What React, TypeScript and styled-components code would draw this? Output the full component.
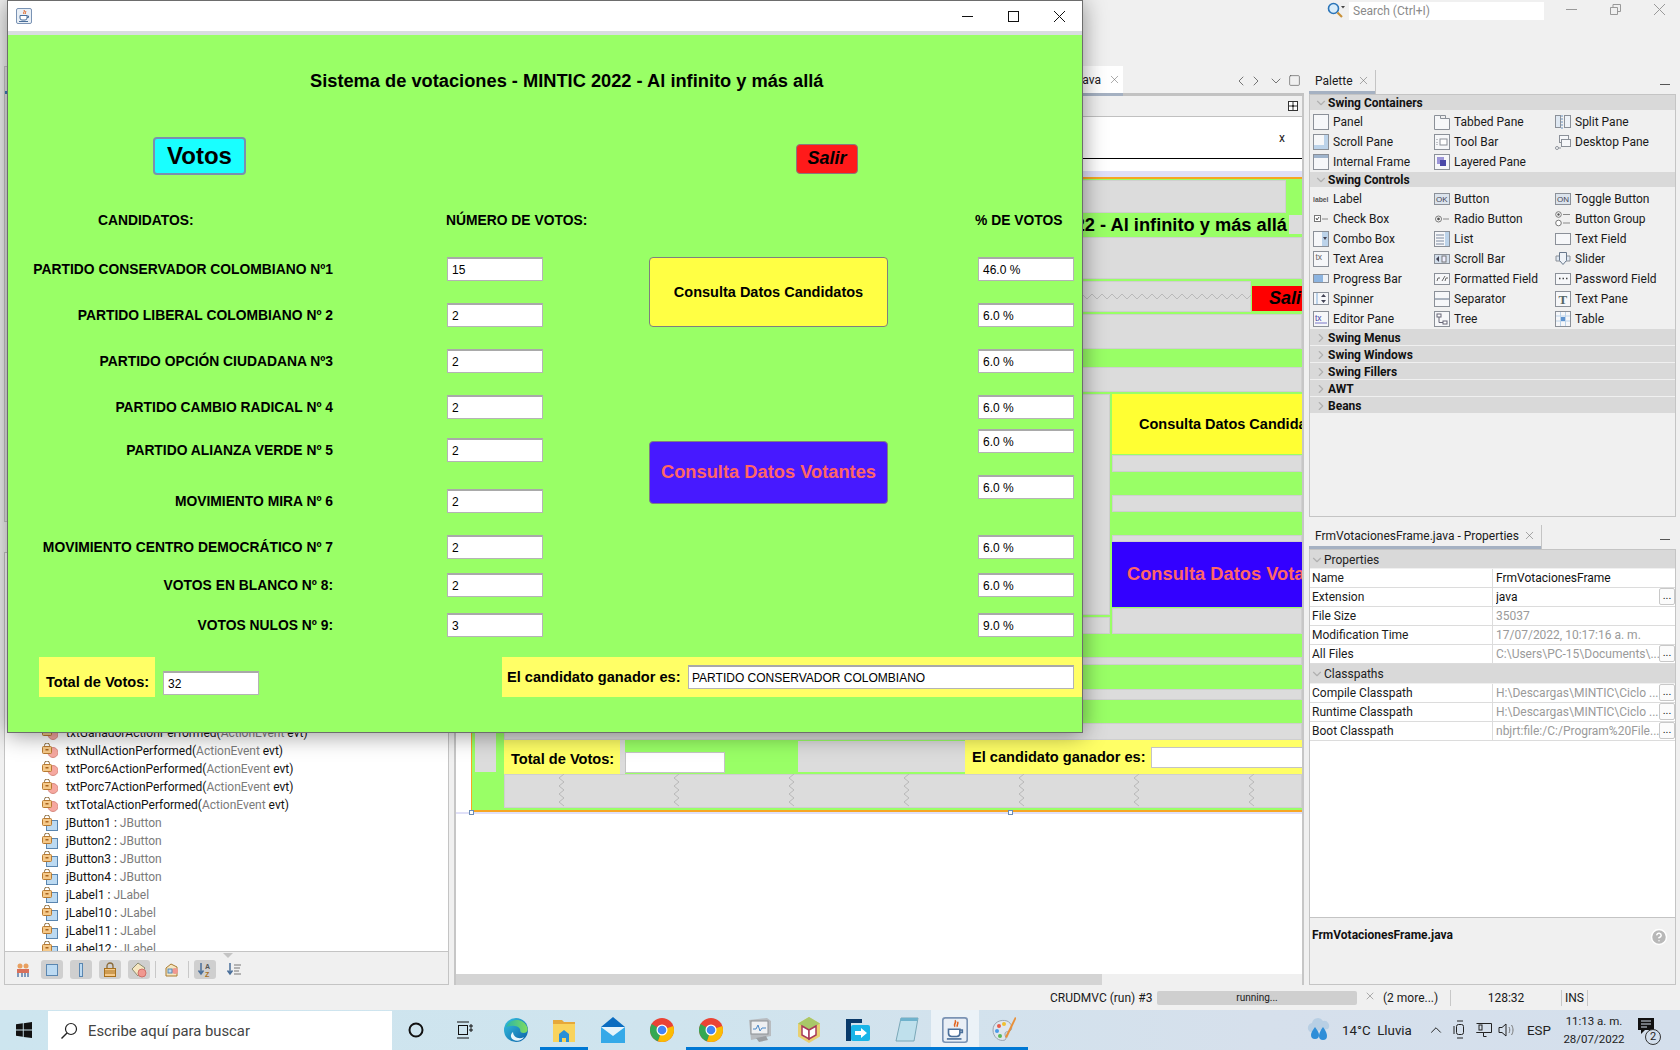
import React from "react";
import styled, { createGlobalStyle } from "styled-components";
import { ChevronDown, ChevronLeft, ChevronRight, X, HelpCircle, Square, ChevronUp } from "lucide-react";

const GlobalStyle = createGlobalStyle`
	html, body { margin: 0; padding: 0; background: #f0f0f0; overflow: hidden; }
	* { box-sizing: border-box; }
	#root { width: 1680px; height: 1050px; }
`;

const UI_FONT = `Roboto, "Noto Sans", sans-serif`;
const JAVA_FONT = `"Liberation Sans", Arial, sans-serif`;
const GREEN = "#99ff66";
const GRAY = "#dcdcdc";

const Desktop = styled.div`
	position: relative;
	width: 1680px;
	height: 1050px;
	overflow: hidden;
	background: #f0f0f0;
	font-family: ${UI_FONT};
	font-size: 12px;
	color: #1a1a1a;
	display: flex;
	flex-direction: column;
`;

/* ---------- IDE top bar ---------- */
const TopBar = styled.div`
	height: 66px;
	flex: none;
	display: flex;
	align-items: flex-start;
	padding: 2px 0 0 1327px;
`;
const SearchBox = styled.div`
	width: 195px;
	height: 18px;
	margin-left: 4px;
	background: #fff;
	color: #8a8a8a;
	font-size: 12px;
	line-height: 18px;
	padding-left: 4px;
`;
const WinControls = styled.div`
	display: flex;
	align-items: center;
	gap: 33px;
	margin-left: 22px;
	padding-top: 2px;
`;

/* ---------- IDE workspace ---------- */
const Workspace = styled.div`
	flex: none;
	height: 919px;
	display: flex;
`;
const LeftColumn = styled.div`
	width: 445px;
	margin-left: 4px;
	display: flex;
	flex-direction: column;
	gap: 30px;
`;
const ProjectsPanel = styled.div`
	height: 456px;
	flex: none;
	border: 1px solid #c4c4c4;
	background: #e4e4e4;
	padding-top: 24px;
`;
const BlueLine = styled.div`
	height: 3px;
	background: #3d7db8;
`;
const NavigatorPanel = styled.div`
	flex: 1;
	min-height: 0;
	display: flex;
	flex-direction: column;
	border: 1px solid #c4c4c4;
	background: #fff;
`;
const MemberList = styled.div`
	flex: 1;
	min-height: 0;
	overflow: hidden;
	padding-top: 171px;
	margin-right: 9px;
`;
const MemberRow = styled.div`
	height: 18px;
	display: flex;
	align-items: center;
	gap: 8px;
	padding-left: 37px;
	font-size: 12px;
	white-space: nowrap;
	color: #111;
`;
const TypeName = styled.span`
	color: #7b7b7b;
`;
const NavToolbar = styled.div`
	height: 33px;
	flex: none;
	background: #f0f0f0;
	border-top: 1px solid #c4c4c4;
	display: flex;
	align-items: center;
	padding: 3px 0 0 7px;
	gap: 7px;
	position: relative;
`;
const ToolButton = styled.div<{ $on?: boolean }>`
	width: 22px;
	height: 19px;
	border-radius: 3px;
	background: ${(p) => (p.$on ? "#cfcfcf" : "transparent")};
	display: flex;
	align-items: center;
	justify-content: center;
`;
const ToolSep = styled.div`
	width: 1px;
	height: 17px;
	background: #c8c8c8;
	margin: 0 -2px;
`;
const DropMark = styled.div`
	position: absolute;
	top: 1px;
	left: 218px;
	width: 0;
	height: 0;
	border-left: 5px solid transparent;
	border-right: 5px solid transparent;
	border-top: 5px solid #c4c4c4;
`;

/* ---------- editor ---------- */
const EditorColumn = styled.div`
	width: 850px;
	margin-left: 5px;
	display: flex;
	flex-direction: column;
`;
const TabStrip = styled.div`
	height: 30px;
	flex: none;
	display: flex;
	align-items: stretch;
	border-bottom: 3px solid #c2c2c2;
`;
const EditorTab = styled.div`
	margin-left: 489px;
	width: 180px;
	background: #fff;
	border-bottom: 3px solid #a5b1c2;
	margin-bottom: -3px;
	display: flex;
	align-items: center;
	justify-content: flex-end;
	gap: 7px;
	padding: 0 2px 0 0;
	font-size: 12px;
	white-space: nowrap;
	overflow: hidden;
`;
const TabNav = styled.div`
	margin-left: auto;
	display: flex;
	align-items: center;
	gap: 4px;
	padding: 2px 3px 0 0;
	color: #555;
`;
const NextArrow = styled(ChevronRight)`
	margin-left: -5px;
`;
const EditorBody = styled.div`
	flex: 1;
	border-left: 2px solid #c6c6c6;
	border-right: 2px solid #c6c6c6;
	display: flex;
	flex-direction: column;
	background: #fff;
	overflow: hidden;
`;
const EditorToolbar = styled.div`
	height: 21px;
	flex: none;
	background: #f0f0f0;
	border-bottom: 1px solid #c0c0c0;
	display: flex;
	align-items: center;
	justify-content: flex-end;
	padding-right: 4px;
`;
const PreviewHeader = styled.div`
	height: 42px;
	flex: none;
	background: #fff;
	border-bottom: 1px solid #000;
	display: flex;
	align-items: center;
	justify-content: flex-end;
	padding-right: 17px;
	font-size: 12px;
`;
const LavenderEdge = styled.div<{ $top: number; $h: number }>`
	height: ${(p) => p.$h}px;
	margin-top: ${(p) => p.$top}px;
	background: #e0e0f8;
	flex: none;
`;
const Canvas = styled.div`
	flex: none;
	height: 635px;
	margin-left: 15px;
	border-top: 2px solid #f6a623;
	border-bottom: 2px solid #f6a623;
	border-left: 1px solid #f6a623;
	background: ${GREEN};
	overflow: hidden;
	display: flex;
	flex-direction: column;
	font-family: ${JAVA_FONT};
`;
const Band = styled.div<{ $h: number; $mt?: number; $tone: "gray" | "green"; $inset?: number }>`
	height: ${(p) => p.$h}px;
	flex: none;
	margin-top: ${(p) => p.$mt ?? 0}px;
	margin-right: ${(p) => p.$inset ?? 0}px;
	background: ${(p) => (p.$tone === "gray" ? GRAY : GREEN)};
	box-shadow: ${(p) => (p.$tone === "gray" ? "inset 0 0 0 1px #cfcfcf" : "none")};
`;
const TitleStrip = styled.div`
	height: 21px;
	flex: none;
	margin-top: 2px;
	padding-bottom: 2px;
	display: flex;
	justify-content: flex-end;
	align-items: center;
	white-space: nowrap;
	font-size: 18.25px;
	font-weight: 700;
	color: #000;
`;
const SmallGray = styled.div`
	width: 13px;
	height: 19px;
	margin-left: 2px;
	background: ${GRAY};
	flex: none;
`;
const SpringRow = styled.div`
	height: 31px;
	flex: none;
	margin-top: 2px;
	display: flex;
`;
const SpringH = styled.div`
	flex: 1;
	background: ${GRAY};
	box-shadow: inset 0 0 0 1px #cfcfcf;
	display: flex;
	align-items: center;
	overflow: hidden;
`;
const PreviewSalir = styled.div`
	width: 50px;
	height: 25px;
	margin: 5px 0 0 1px;
	background: #ff0000;
	font-size: 18px;
	font-weight: 700;
	font-style: italic;
	color: #000;
	line-height: 25px;
	padding-left: 17px;
	white-space: nowrap;
	overflow: hidden;
`;
const SplitRow = styled.div`
	flex: none;
	height: 241px;
	margin-top: 2px;
	display: flex;
	gap: 2px;
`;
const SplitLeft = styled.div`
	width: 638px;
	flex: none;
	display: flex;
	flex-direction: column;
`;
const SplitRight = styled.div`
	flex: 1;
	display: flex;
	flex-direction: column;
	min-width: 0;
`;
const PreviewButton = styled.div<{ $bg: string; $fg: string; $size: number; $h: number; $pad: number; $mt?: number }>`
	height: ${(p) => p.$h}px;
	margin-top: ${(p) => p.$mt ?? 0}px;
	flex: none;
	background: ${(p) => p.$bg};
	color: ${(p) => p.$fg};
	font-size: ${(p) => p.$size}px;
	font-weight: 700;
	display: flex;
	align-items: center;
	padding-left: ${(p) => p.$pad}px;
	padding-bottom: ${(p) => (p.$size > 16 ? 2 : 0)}px;
	white-space: nowrap;
	overflow: hidden;
`;
const BottomGroup = styled.div`
	flex: 1;
	display: flex;
`;
const BottomRail = styled.div`
	width: 32px;
	flex: none;
	padding-left: 3px;
`;
const RailGray = styled.div`
	width: 21px;
	height: 49px;
	background: ${GRAY};
`;
const BottomMain = styled.div`
	flex: 1;
	min-width: 0;
	display: flex;
	flex-direction: column;
`;
const PreviewTotals = styled.div`
	flex: none;
	height: 34px;
	display: flex;
`;
const PreviewLabel = styled.div<{ $w: number; $grow?: boolean }>`
	width: ${(p) => (p.$grow ? "auto" : `${p.$w}px`)};
	flex: ${(p) => (p.$grow ? 1 : "none")};
	background: #ffff66;
	color: #000;
	font-size: 14.6px;
	font-weight: 700;
	display: flex;
	align-items: center;
	padding: ${(p) => (p.$grow ? 0 : 3)}px 0 0 7px;
	white-space: nowrap;
	overflow: hidden;
`;
const PreviewGap = styled.div`
	width: 5px;
	flex: none;
	background: ${GRAY};
`;
const PreviewFieldCell = styled.div`
	width: 173px;
	flex: none;
	padding-top: 12px;
`;
const PreviewField = styled.div<{ $w?: number; $h: number; $ml?: number }>`
	width: ${(p) => (p.$w ? `${p.$w}px` : "100%")};
	height: ${(p) => p.$h}px;
	margin-left: ${(p) => p.$ml ?? 0}px;
	background: #fff;
	flex: none;
	box-shadow: inset 0 0 0 1px #c4c4c4;
`;
const PreviewEmpty = styled.div`
	width: 167px;
	height: 31px;
	margin-top: 1px;
	flex: none;
	background: ${GRAY};
`;
const SpringsRow = styled.div`
	height: 34px;
	flex: none;
	background: ${GRAY};
	box-shadow: inset 0 0 0 1px #cfcfcf;
	display: flex;
	align-items: center;
	gap: 107px;
	padding-left: 54px;
`;
const HandleRow = styled.div`
	position: relative;
	height: 0;
`;
const Handle = styled.div<{ $x: number }>`
	position: absolute;
	left: ${(p) => p.$x}px;
	top: -2px;
	width: 5px;
	height: 5px;
	background: #fff;
	border: 1px solid #6a8cb5;
`;
const EditorSpacer = styled.div`
	flex: 1;
`;
const HScroll = styled.div`
	height: 11px;
	flex: none;
	background: #d4d4d4;
	display: flex;
	justify-content: flex-end;
`;
const HScrollEnd = styled.div`
	width: 200px;
	background: #f0f0f0;
`;

/* ---------- right side ---------- */
const RightColumn = styled.div`
	width: 367px;
	margin-left: 5px;
	display: flex;
	flex-direction: column;
`;
const SideTabs = styled.div<{ $h: number }>`
	height: ${(p) => p.$h}px;
	flex: none;
	display: flex;
	align-items: flex-end;
	justify-content: space-between;
	padding-right: 6px;
	border-bottom: 1px solid #c4c4c4;
`;
const SideTab = styled.div`
	height: 24px;
	display: flex;
	align-items: center;
	gap: 4px;
	padding: 0 5px 3px 6px;
	border-right: 1px solid #c4c4c4;
	box-shadow: inset 0 -3px 0 #a5b1c2;
	font-size: 12px;
	white-space: nowrap;
`;
const DashMark = styled.div`
	width: 10px;
	height: 1px;
	background: #555;
	margin-bottom: 9px;
`;
const PalettePane = styled.div`
	height: 422px;
	flex: none;
	border: 1px solid #c4c4c4;
	border-top: 0;
	background: #f0f0f0;
`;
const SectionHead = styled.div<{ $h?: number; $bold?: boolean; $indent: number }>`
	height: ${(p) => p.$h ?? 16}px;
	background: #d9d9d9;
	display: flex;
	align-items: center;
	padding: 1px 0 0 ${(p) => p.$indent}px;
	font-size: 12px;
	font-weight: ${(p) => (p.$bold ? 700 : 400)};
	color: ${(p) => (p.$bold ? "#111" : "#222")};
	border-bottom: 1px solid #f0f0f0;
`;
const PaletteGrid = styled.div`
	display: grid;
	grid-template-columns: 121px 121px 121px;
	grid-auto-rows: 20px;
	padding: 1px 0 0 3px;
`;
const PaletteItem = styled.div`
	display: flex;
	align-items: center;
	gap: 4px;
	font-size: 12px;
	white-space: nowrap;
`;
const PropsPane = styled.div`
	flex: 1;
	display: flex;
	flex-direction: column;
	border: 1px solid #c4c4c4;
	border-top: 0;
	background: #f0f0f0;
`;
const PropsSheet = styled.div`
	height: 368px;
	flex: none;
	background: #fff;
	border-bottom: 1px solid #c4c4c4;
`;
const PropRow = styled.div`
	height: 19px;
	display: grid;
	grid-template-columns: 183px 1fr;
	border-bottom: 1px solid #dcdcdc;
	font-size: 12px;
	line-height: 19px;
	white-space: nowrap;
`;
const PropName = styled.div`
	padding-left: 2px;
	border-right: 1px solid #dcdcdc;
`;
const PropValue = styled.div<{ $dim?: boolean }>`
	padding-left: 3px;
	color: ${(p) => (p.$dim ? "#9a9a9a" : "#111")};
	display: flex;
	justify-content: space-between;
	overflow: hidden;
`;
const PropText = styled.span`
	flex: 1;
	min-width: 0;
	overflow: hidden;
`;
const DotsButton = styled.span`
	width: 16px;
	height: 17px;
	flex: none;
	background: #fbfbfb;
	border: 1px solid #c8c8c8;
	border-radius: 2px;
	font-size: 11px;
	line-height: 14px;
	text-align: center;
	color: #222;
`;
const PropsFooter = styled.div`
	flex: 1;
	display: flex;
	justify-content: space-between;
	padding: 10px 7px 0 2px;
	font-weight: 700;
	font-size: 12px;
`;
const FooterName = styled.span`
	color: #111;
`;

/* ---------- status bar ---------- */
const StatusBar = styled.div`
	flex: none;
	height: 25px;
	display: flex;
	align-items: center;
	padding-left: 1050px;
	font-size: 12px;
	white-space: nowrap;
`;
const ProgressTrack = styled.div`
	width: 200px;
	height: 14px;
	background: #cfcfcf;
	border-radius: 2px;
	text-align: center;
	font-size: 10px;
	line-height: 14px;
`;
const StatusSep = styled.div`
	width: 1px;
	height: 16px;
	background: #c8c8c8;
	flex: none;
`;
const StatusCell = styled.div<{ $w: number; $center?: boolean }>`
	width: ${(p) => p.$w}px;
	text-align: ${(p) => (p.$center ? "center" : "left")};
	flex: none;
`;

/* ---------- taskbar ---------- */
const Taskbar = styled.div`
	flex: none;
	height: 40px;
	display: flex;
	align-items: center;
	background: linear-gradient(90deg, #cde5ef 0%, #cfe4ee 40%, #d6e0ec 75%, #d4dfec 100%);
	position: relative;
`;
const StartSlot = styled.div`
	width: 48px;
	display: flex;
	justify-content: center;
`;
const TaskSearch = styled.div`
	width: 344px;
	height: 39px;
	margin-top: 1px;
	background: #fff;
	display: flex;
	align-items: center;
	gap: 10px;
	padding-left: 12px;
	font-size: 14.8px;
	color: #444;
	flex: none;
`;
const TaskIcon = styled.div<{ $w: number; $open?: boolean; $active?: boolean; $ml?: number }>`
	width: ${(p) => p.$w}px;
	height: 40px;
	margin-left: ${(p) => p.$ml ?? 0}px;
	flex: none;
	display: flex;
	align-items: center;
	justify-content: center;
	background: ${(p) => (p.$active ? "rgba(255,255,255,.55)" : "transparent")};
	box-shadow: ${(p) => (p.$open ? "inset 0 -3px 0 #0078d4" : "none")};
`;
const Tray = styled.div`
	margin-left: auto;
	display: flex;
	align-items: center;
	padding-right: 24px;
	color: #222;
`;
const TrayText = styled.span<{ $ml: number; $w: number }>`
	margin-left: ${(p) => p.$ml}px;
	width: ${(p) => p.$w}px;
	font-size: 13.3px;
	white-space: nowrap;
`;
const TrayItem = styled.div<{ $ml: number }>`
	margin-left: ${(p) => p.$ml}px;
	display: flex;
	align-items: center;
`;
const Clock = styled.div`
	margin-left: 14px;
	width: 66px;
	text-align: center;
	font-size: 11.5px;
	line-height: 18px;
`;
const NoteBadge = styled.div`
	position: relative;
	margin-left: 11px;
	width: 18px;
	height: 24px;
`;
const BadgeCount = styled.span`
	position: absolute;
	right: -5px;
	bottom: -3px;
	width: 16px;
	height: 16px;
	border-radius: 50%;
	background: #d4dfec;
	border: 1px solid #333;
	font-size: 11px;
	line-height: 14px;
	text-align: center;
`;

/* ---------- voting window ---------- */
const VotingWindow = styled.div`
	position: absolute;
	left: 7px;
	top: 0;
	width: 1076px;
	height: 733px;
	border: 1px solid #6d6d6d;
	box-shadow: 0 2px 22px rgba(0, 0, 0, 0.42);
	display: flex;
	flex-direction: column;
	font-family: ${JAVA_FONT};
	color: #000;
`;
const WinTitle = styled.div`
	height: 30px;
	flex: none;
	background: #fff;
	display: flex;
	align-items: center;
	padding-left: 8px;
`;
const WinButtons = styled.div`
	margin-left: auto;
	display: flex;
	align-items: center;
	gap: 35px;
	padding-right: 17px;
`;
const WinBand = styled.div`
	height: 4px;
	flex: none;
	background: #d9dde1;
`;
const WinBody = styled.div`
	flex: 1;
	background: ${GREEN};
	padding-top: 36px;
	display: flex;
	flex-direction: column;
`;
const WinHeading = styled.h1`
	margin: 0;
	height: 20px;
	padding-left: 302px;
	font-size: 18.25px;
	line-height: 20px;
	font-weight: 700;
	white-space: nowrap;
`;
const TopActions = styled.div`
	margin-top: 46px;
	height: 38px;
	padding-left: 145px;
	display: flex;
	align-items: flex-start;
`;
const VotosBadge = styled.div`
	width: 93px;
	height: 38px;
	background: #19ffff;
	border: 2px solid #7a8fb0;
	border-radius: 4px;
	font-size: 24px;
	font-weight: 700;
	line-height: 33px;
	text-align: center;
`;
const SalirButton = styled.div`
	width: 62px;
	height: 30px;
	margin: 7px 0 0 550px;
	background: #ff1a1a;
	border: 1px solid #8a7a7a;
	border-radius: 4px;
	font-size: 18px;
	font-weight: 700;
	font-style: italic;
	line-height: 26px;
	text-align: center;
`;
const FormColumns = styled.div`
	margin-top: 37px;
	display: flex;
`;
const VotesBlock = styled.div`
	width: 535px;
	flex: none;
`;
const ColHeads = styled.div`
	display: flex;
	height: 16px;
`;
const ColHead = styled.div<{ $w?: number; $pl: number }>`
	width: ${(p) => (p.$w ? `${p.$w}px` : "auto")};
	padding-left: ${(p) => p.$pl}px;
	font-size: 13.85px;
	line-height: 17px;
	font-weight: 700;
	white-space: nowrap;
	flex: none;
`;
const VoteRow = styled.div<{ $gap: number }>`
	margin-top: ${(p) => p.$gap}px;
	display: flex;
	align-items: center;
`;
const PartyLabel = styled.div`
	width: 325px;
	flex: none;
	text-align: right;
	font-size: 13.85px;
	font-weight: 700;
	white-space: nowrap;
`;
const TextField = styled.div<{ $w: number; $ml?: number; $mt?: number }>`
	width: ${(p) => p.$w}px;
	height: 24px;
	margin-left: ${(p) => p.$ml ?? 0}px;
	margin-top: ${(p) => p.$mt ?? 0}px;
	flex: none;
	background: #fff;
	border: 1px solid #b4b4b4;
	border-top: 2px solid #a9a9a9;
	font-size: 12px;
	line-height: 23px;
	padding-left: 4px;
	white-space: nowrap;
	overflow: hidden;
`;
const ActionBlock = styled.div`
	width: 239px;
	margin-left: 106px;
	flex: none;
	display: flex;
	flex-direction: column;
`;
const QueryButton = styled.div<{ $bg: string; $fg: string; $size: number; $h: number; $mt: number }>`
	height: ${(p) => p.$h}px;
	margin-top: ${(p) => p.$mt}px;
	background: ${(p) => p.$bg};
	color: ${(p) => p.$fg};
	font-size: ${(p) => p.$size}px;
	font-weight: 700;
	border: 1px solid #7f7f7f;
	border-radius: 4px;
	padding-bottom: ${(p) => (p.$size > 16 ? 2 : 0)}px;
	display: flex;
	align-items: center;
	justify-content: center;
	white-space: nowrap;
`;
const PercentColumn = styled.div`
	margin-left: 90px;
	width: 96px;
	flex: none;
`;
const PercentHead = styled.div`
	margin-left: -3px;
`;
const TotalsRow = styled.div`
	margin-top: 20px;
	display: flex;
	padding-left: 31px;
`;
const TotalLabel = styled.div`
	width: 116px;
	height: 40px;
	background: #ffff66;
	font-size: 14.6px;
	font-weight: 700;
	line-height: 50px;
	padding-left: 7px;
	white-space: nowrap;
`;
const WinnerBand = styled.div`
	margin-left: 243px;
	flex: 1;
	height: 40px;
	background: #ffff66;
	display: flex;
	align-items: center;
	font-size: 14.6px;
	font-weight: 700;
	padding-left: 5px;
	white-space: nowrap;
`;
const WinnerField = styled.div`
	width: 386px;
	height: 24px;
	margin: 0 8px 0 auto;
	background: #fff;
	border: 1px solid #b4b4b4;
	border-top: 2px solid #a9a9a9;
	font-size: 12px;
	font-weight: 400;
	line-height: 23px;
	padding-left: 3px;
`;

/* ---------- data ---------- */
const parties = [
	{ name: "PARTIDO CONSERVADOR COLOMBIANO Nº1", votes: "15", y: 257 },
	{ name: "PARTIDO LIBERAL COLOMBIANO Nº 2", votes: "2", y: 303 },
	{ name: "PARTIDO OPCIÓN CIUDADANA Nº3", votes: "2", y: 349 },
	{ name: "PARTIDO CAMBIO RADICAL Nº 4", votes: "2", y: 395 },
	{ name: "PARTIDO ALIANZA VERDE Nº 5", votes: "2", y: 438 },
	{ name: "MOVIMIENTO MIRA Nº 6", votes: "2", y: 489 },
	{ name: "MOVIMIENTO CENTRO DEMOCRÁTICO Nº 7", votes: "2", y: 535 },
	{ name: "VOTOS EN BLANCO Nº 8:", votes: "2", y: 573 },
	{ name: "VOTOS NULOS Nº 9:", votes: "3", y: 613 },
];
const percents = [
	{ value: "46.0 %", y: 257 },
	{ value: "6.0 %", y: 303 },
	{ value: "6.0 %", y: 349 },
	{ value: "6.0 %", y: 395 },
	{ value: "6.0 %", y: 429 },
	{ value: "6.0 %", y: 475 },
	{ value: "6.0 %", y: 535 },
	{ value: "6.0 %", y: 573 },
	{ value: "9.0 %", y: 613 },
];
const gapOf = (list: { y: number }[], i: number) => (i === 0 ? list[0].y - 228 : list[i].y - list[i - 1].y - 24);

const members: { name: string; type: string; tail?: string; kind: "method" | "field" }[] = [
	{ name: "txtGanadorActionPerformed(", type: "ActionEvent", tail: " evt)", kind: "method" },
	{ name: "txtNullActionPerformed(", type: "ActionEvent", tail: " evt)", kind: "method" },
	{ name: "txtPorc6ActionPerformed(", type: "ActionEvent", tail: " evt)", kind: "method" },
	{ name: "txtPorc7ActionPerformed(", type: "ActionEvent", tail: " evt)", kind: "method" },
	{ name: "txtTotalActionPerformed(", type: "ActionEvent", tail: " evt)", kind: "method" },
	{ name: "jButton1 : ", type: "JButton", kind: "field" },
	{ name: "jButton2 : ", type: "JButton", kind: "field" },
	{ name: "jButton3 : ", type: "JButton", kind: "field" },
	{ name: "jButton4 : ", type: "JButton", kind: "field" },
	{ name: "jLabel1 : ", type: "JLabel", kind: "field" },
	{ name: "jLabel10 : ", type: "JLabel", kind: "field" },
	{ name: "jLabel11 : ", type: "JLabel", kind: "field" },
	{ name: "jLabel12 : ", type: "JLabel", kind: "field" },
];

const containers = ["Panel", "Tabbed Pane", "Split Pane", "Scroll Pane", "Tool Bar", "Desktop Pane", "Internal Frame", "Layered Pane"];
const controls = [
	"Label", "Button", "Toggle Button",
	"Check Box", "Radio Button", "Button Group",
	"Combo Box", "List", "Text Field",
	"Text Area", "Scroll Bar", "Slider",
	"Progress Bar", "Formatted Field", "Password Field",
	"Spinner", "Separator", "Text Pane",
	"Editor Pane", "Tree", "Table",
];

/* ---------- drawings ---------- */
const frame = { fill: "#f6f7f9", stroke: "#8b9098" };
const blue = "#bcd3ea";

const PaletteGlyph: React.FC<{ name: string }> = ({ name }) => {
	const box = <rect x="0.5" y="0.5" width="15" height="15" {...frame} />;
	const shapes: Record<string, React.ReactNode> = {
		Panel: box,
		"Tabbed Pane": <><path d="M.5 15.5V1.5h6v3h9v11z" {...frame} /><path d="M6.5 1.5h5v3" fill="none" stroke="#8b9098" /></>,
		"Split Pane": <><rect x="0.5" y="1.5" width="5" height="12" fill="#dfe8f2" stroke="#8b9098" /><rect x="9.5" y="1.5" width="6" height="12" fill="#eef2f7" stroke="#8b9098" /><path d="M7 1v14" stroke="#6b93c0" strokeDasharray="2 1" /></>,
		"Scroll Pane": <>{box}<rect x="11" y="1" width="4" height="14" fill={blue} /><rect x="1" y="11" width="14" height="4" fill={blue} /></>,
		"Tool Bar": <>{box}<rect x="6" y="5" width="7" height="6" fill="#fff" stroke="#8b9098" /><path d="M3 5v1M3 8v1M3 10v1" stroke="#8b9098" /></>,
		"Desktop Pane": <><rect x="4.5" y="1.5" width="9" height="7" {...frame} /><rect x="6.5" y="5.5" width="9" height="7" {...frame} /><path d="M1 14h5" stroke="#8b9098" /><circle cx="2" cy="14" r="1.5" fill="#fff" stroke="#8b9098" /></>,
		"Internal Frame": <>{box}<rect x="1" y="1" width="14" height="3" fill="#9fb4cc" /></>,
		"Layered Pane": <>{box}<rect x="3" y="3" width="7" height="7" fill="#9c95d8" /><rect x="6" y="6" width="6" height="6" fill="#4a48a8" /></>,
		Label: <text x="0" y="11" fontSize="6.8" fontWeight="700" fill="#555" fontFamily="Liberation Sans">label</text>,
		Button: <><rect x="0.5" y="2.5" width="15" height="11" fill="#dbe3ec" stroke="#8b9098" /><text x="2" y="11" fontSize="8" fill="#445" fontFamily="Liberation Sans">OK</text></>,
		"Toggle Button": <><rect x="0.5" y="2.5" width="15" height="11" fill="#dbe3ec" stroke="#8b9098" /><text x="2" y="11" fontSize="8" fill="#445" fontFamily="Liberation Sans">ON</text></>,
		"Check Box": <><rect x="1.5" y="4.5" width="6" height="6" fill="#fff" stroke="#777" /><path d="M3 7l1 2 2-3" stroke="#555" fill="none" /><path d="M9 8h6" stroke="#888" /></>,
		"Radio Button": <><circle cx="4.5" cy="8" r="3" fill="#fff" stroke="#777" /><circle cx="4.5" cy="8" r="1.4" fill="#555" /><path d="M9 8h6" stroke="#888" /></>,
		"Button Group": <><circle cx="3.5" cy="3.5" r="2.8" fill="#fff" stroke="#777" /><circle cx="3.5" cy="3.5" r="1.2" fill="#555" /><circle cx="3.5" cy="12" r="2.8" fill="#fff" stroke="#777" /><path d="M8 3.5h7M8 12h7" stroke="#888" /></>,
		"Combo Box": <>{box}<rect x="9" y="1" width="6" height="14" fill={blue} /><path d="M10 6h4l-2 3z" fill="#445" /></>,
		List: <>{box}<path d="M2 4h8M2 7h8M2 10h8M2 13h8" stroke="#7c8aa0" /><rect x="11" y="1" width="4" height="14" fill={blue} /></>,
		"Text Field": <rect x="0.5" y="2.5" width="15" height="11" {...frame} />,
		"Text Area": <>{box}<text x="2.5" y="9" fontSize="8.5" fill="#666" fontFamily="Liberation Sans">tx</text></>,
		"Scroll Bar": <><rect x="0.5" y="3.5" width="15" height="9" fill="#d3dfec" stroke="#8b9098" /><path d="M5 5v6L2 8z" fill="#445" /><rect x="8" y="5" width="4" height="6" fill="#eef" stroke="#777" /></>,
		Slider: <><path d="M1 5h14v5H1z" fill="#dfe8f2" stroke="#8b9098" /><path d="M4.5 1.5h7v8l-3.5 4-3.5-4z" fill="#eef2f7" stroke="#68788c" /></>,
		"Progress Bar": <><rect x="0.5" y="3.5" width="15" height="8" fill="#eef2f7" stroke="#8b9098" /><rect x="1" y="4" width="9" height="7" fill="#8cb4e0" /></>,
		"Formatted Field": <><rect x="0.5" y="2.5" width="15" height="11" {...frame} /><path d="M3 10l1-3h2M8 10l3-5M11 10l1-3h2" stroke="#666" fill="none" /></>,
		"Password Field": <><rect x="0.5" y="2.5" width="15" height="11" {...frame} /><path d="M4 7.5h1.5M7.5 7.5h1.5M11 7.5h1.5" stroke="#444" strokeWidth="1.5" /></>,
		Spinner: <><rect x="0.5" y="1.5" width="15" height="12" {...frame} /><rect x="3" y="2" width="2" height="11" fill={blue} /><path d="M8 6l2.5-3L13 6zM8 9l2.5 3L13 9z" fill="#445" /></>,
		Separator: <><rect x="0.5" y="0.5" width="15" height="15" fill="#f6f7f9" stroke="#8b9098" /><path d="M1 8h14" stroke="#5f6f84" /></>,
		"Text Pane": <>{box}<text x="3.5" y="13" fontSize="13" fontWeight="700" fill="#566" fontFamily="Liberation Serif">T</text></>,
		"Editor Pane": <>{box}<text x="2" y="10" fontSize="8.5" fill="#4a48a8" fontFamily="Liberation Sans">tx</text><path d="M2 12h12" stroke="#7a78c8" /></>,
		Tree: <>{box}<rect x="3" y="3" width="4" height="3" fill="#fff" stroke="#667" /><rect x="9" y="10" width="4" height="3" fill="#fff" stroke="#667" /><path d="M5 6v5.5h4" stroke="#667" fill="none" /></>,
		Table: <>{box}<path d="M1 5h14M1 10h14M5.5 1v14M10.5 1v14" stroke={blue} /><rect x="6" y="6" width="4" height="4" fill="#5f94d0" /></>,
	};
	return <svg width="16" height="16" viewBox="0 0 16 16" style={{ flex: "none" }}>{shapes[name]}</svg>;
};

const LockBadge = () => (
	<>
		<path d="M2.5 4V2.5a2.5 2.5 0 0 1 5 0V4" fill="none" stroke="#8a6a3a" />
		<rect x="0.5" y="3.5" width="9" height="7" rx="1" fill="#f5c98a" stroke="#b87a30" />
		<rect x="3.5" y="6" width="3" height="1.5" fill="#a8641c" />
	</>
);

const MemberIcon: React.FC<{ kind: "method" | "field" }> = ({ kind }) => (
	<svg width="16" height="16" viewBox="0 0 16 16" style={{ flex: "none" }}>
		{kind === "method" ? (
			<circle cx="11" cy="9.5" r="5" fill="#f6a8a0" stroke="#d88a80" />
		) : (
			<rect x="4.5" y="5.5" width="11" height="10" fill="#bcdaf2" stroke="#5a86b0" />
		)}
		<LockBadge />
	</svg>
);

const Zigzag: React.FC<{ width: number; height: number; step: number }> = ({ width, height, step }) => {
	const pts: string[] = [];
	for (let i = 0, up = false; i <= height; i += step, up = !up) {
		pts.push(`${up ? 1 : 6},${i}`);
	}
	return (
		<svg width={width} height={height} style={{ flex: "none" }}>
			<polyline points={pts.join(" ")} fill="none" stroke="#b9b9b9" />
		</svg>
	);
};

const JavaIcon: React.FC<{ size: number }> = ({ size }) => (
	<svg width={size} height={size} viewBox="0 0 16 16">
		<rect x="0.5" y="0.5" width="15" height="15" rx="1.5" fill="#e9eff6" stroke="#7a93b4" />
		<path d="M8 2c1.5 1.5-1.5 2.5 0 4M9.500 3c1 1-.8 1.8 0 3" fill="none" stroke="#e2641f" />
		<path d="M4 7.500h7v2.500a2 2 0 0 1-2 2H6a2 2 0 0 1-2-2z M11 8h1.500v1.500H11" fill="#fff" stroke="#4a6f9a" />
		<path d="M3 13.500h9" stroke="#4a6f9a" />
	</svg>
);

const StartLogo = () => (
	<svg width="16" height="16" viewBox="0 0 16 16">
		<path d="M0 2.300 6.800 1.300V7.600H0zM7.700 1.200 16 0V7.600H7.700zM0 8.500H6.800V14.800L0 13.800zM7.700 8.500H16V16L7.700 14.900z" fill="#111" />
	</svg>
);
const EdgeIcon = () => (
	<svg width="24" height="26" viewBox="0 0 24 26">
		<defs>
			<linearGradient id="edgeG" x1="0" y1="0" x2="1" y2="1"><stop offset="0" stopColor="#36c3e0" /><stop offset="1" stopColor="#0b5fa8" /></linearGradient>
			<linearGradient id="edgeH" x1="0" y1="0" x2="1" y2="0"><stop offset="0" stopColor="#2bb5a8" /><stop offset="1" stopColor="#7fdc5c" /></linearGradient>
		</defs>
		<circle cx="12" cy="13" r="12" fill="url(#edgeG)" />
		<path d="M2 10C5 1 20 0 23.500 11c.8 3-1 5-4 5-4 0-3-3-3.500-4C14 8 7 8 2 10z" fill="url(#edgeH)" />
		<path d="M9 15c0 5 6 8 11 5-3 5-11 5-13 0-.5-2 .5-4 2-5z" fill="#e8f6fb" />
	</svg>
);
const FolderIcon = () => (
	<svg width="22" height="24" viewBox="0 0 22 24">
		<path d="M0 2h9l2 2h11v4H0z" fill="#e6a83a" />
		<rect y="6" width="22" height="18" fill="#f9d35c" />
		<path d="M6 24v-8l5-4 5 4v8h-3v-4H9v4z" fill="#2a8fd8" />
	</svg>
);
const MailIcon = () => (
	<svg width="24" height="26" viewBox="0 0 24 26">
		<path d="M12 0 24 10v16H0V10z" fill="#0a6cc0" />
		<rect y="10" width="24" height="16" fill="#35a9e8" />
		<path d="M0 10 12 19 24 10z" fill="#e6f4fb" />
	</svg>
);
const ChromeIcon = () => (
	<svg width="24" height="24" viewBox="0 0 24 24">
		<circle cx="12" cy="12" r="12" fill="#ea4335" />
		<path d="M12 12 1.600 6A12 12 0 0 0 8 23.300z" fill="#34a853" />
		<path d="M12 12 8 23.300a12 12 0 0 0 4 .7A12 12 0 0 0 23.300 8z" fill="#fbbc04" />
		<circle cx="12" cy="12" r="5.500" fill="#fff" />
		<circle cx="12" cy="12" r="4.300" fill="#4285f4" />
	</svg>
);
const MonitorIcon = () => (
	<svg width="24" height="26" viewBox="0 0 24 26">
		<path d="M1 3 19 1l4 3v15l-20 4z" fill="#b8bcc0" />
		<rect x="3" y="4" width="17" height="13" fill="#eef0f2" stroke="#8c9094" />
		<path d="M5 12h3l2-4 2 6 2-3h4" stroke="#4a88c8" fill="none" />
		<path d="M8 21l10-2 2 4-9 2z" fill="#9a9ea2" />
	</svg>
);
const CubeIcon = () => (
	<svg width="22" height="26" viewBox="0 0 22 26">
		<path d="M11 0 22 6.500v13L11 26 0 19.500v-13z" fill="#e8d070" />
		<path d="M11 0 22 6.500 11 13 0 6.500z" fill="#a8c868" />
		<path d="M4 9l7 4v9l-7-4z" fill="#fff" stroke="#a83a5a" strokeWidth="1.500" />
		<path d="M18 9l-7 4v9l7-4z" fill="#fff" stroke="#a83a5a" strokeWidth="1.500" />
	</svg>
);
const ArrowAppIcon = () => (
	<svg width="24" height="26" viewBox="0 0 24 26">
		<path d="M0 2h16v4H5v18H0z" fill="#0a3a6a" />
		<rect x="5" y="8" width="19" height="16" rx="2" fill="#19b5e8" />
		<path d="M9 14h6v-3l6 5-6 5v-3H9z" fill="#fff" />
	</svg>
);
const NotepadIcon = () => (
	<svg width="24" height="26" viewBox="0 0 24 26">
		<path d="M6 1h17l-4 23H1z" fill="#bfe0ec" stroke="#7aa8b8" />
		<path d="M6 1h17l-1 3H5z" fill="#6fb2cc" />
	</svg>
);
const PaintIcon = () => (
	<svg width="26" height="28" viewBox="0 0 26 28">
		<path d="M2 14C2 6 10 3 16 5c5 2 6 8 3 10-2 1-5 0-5 3s2 4 0 6c-6 2-12-3-12-10z" fill="#dfe6ee" stroke="#9aa4b0" />
		<circle cx="8" cy="10" r="2" fill="#e85a4a" />
		<circle cx="13" cy="8" r="2" fill="#f0c030" />
		<circle cx="6" cy="15" r="2" fill="#4a9ae8" />
		<circle cx="9" cy="20" r="2" fill="#5ab858" />
		<path d="M24 1c1 0 1 1 1 2l-9 19-2-1z" fill="#e8903a" />
	</svg>
);
const RainCloud = () => (
	<svg width="24" height="24" viewBox="0 0 24 24">
		<path d="M3 14a5 5 0 0 1 2-9 6 6 0 0 1 11-2 5 5 0 0 1 5 8z" fill="#b8cfe4" />
		<path d="M8 9c-3 4-4 6-4 8a4 4 0 0 0 8 0c0-2-1-4-4-8zM16 9c-3 4-4 7-4 9a4 4 0 0 0 8 0c0-2-1-5-4-9z" fill="#2f8ed8" />
	</svg>
);
const SearchGlass = () => (
	<svg width="18" height="16" viewBox="0 0 18 16">
		<circle cx="6.500" cy="6.500" r="5" fill="#d8ecfa" stroke="#2a74b8" strokeWidth="1.600" />
		<path d="M10.500 10.500 15 15" stroke="#c89038" strokeWidth="2.200" />
		<path d="M14 4h4l-2 2.500z" fill="#444" />
	</svg>
);
const DesignMark = () => (
	<svg width="10" height="10" viewBox="0 0 10 10">
		<rect x="0.500" y="0.500" width="9" height="9" fill="#fff" stroke="#333" />
		<path d="M5 1v8M1 5h8" stroke="#333" />
		<rect x="4" y="4" width="2" height="2" fill="#333" />
	</svg>
);

const navTools: { on?: boolean; glyph: React.ReactNode; sepAfter?: boolean }[] = [
	{ glyph: <><circle cx="5" cy="4" r="2.500" fill="#e8a060" /><circle cx="11" cy="4" r="2.500" fill="#e8a060" /><rect x="2" y="7" width="12" height="4" fill="#d8705a" /><path d="M3 11v4M7 11v4M10 11v4M13 11v4" stroke="#5a7ca8" strokeWidth="1.500" /></> },
	{ on: true, glyph: <rect x="2.500" y="2.500" width="11" height="11" fill="#bcdaf2" stroke="#5a86b0" /> },
	{ on: true, glyph: <rect x="6.500" y="1.500" width="3" height="13" fill="#bcdaf2" stroke="#5a86b0" /> },
	{ on: true, glyph: <><path d="M5 6V4a3 3 0 0 1 6 0v2" fill="none" stroke="#8a6a3a" strokeWidth="1.300" /><rect x="2.500" y="6.500" width="11" height="8" fill="#f5c98a" stroke="#a8701c" /><path d="M3 9h10M3 11h10" stroke="#a8701c" /></> },
	{ on: true, sepAfter: true, glyph: <><path d="M1 7 7 1l7 5-7 8z" fill="#f5e6c0" stroke="#8a8a70" /><circle cx="11" cy="11" r="4" fill="#f09890" stroke="#d07068" /></> },
	{ sepAfter: true, glyph: <><path d="M2 6 7 2l6 3v9H2z" fill="#f5e6c0" stroke="#a87a30" /><circle cx="11" cy="9" r="3" fill="#f09890" /><rect x="4" y="7" width="4" height="4" fill="#bcdaf2" stroke="#5a86b0" /></> },
	{ on: true, glyph: <><path d="M4 1v10M1.500 8.500 4 12l2.500-3.500" fill="none" stroke="#4a6f9a" strokeWidth="1.500" /><text x="8" y="7" fontSize="7" fontWeight="700" fill="#555" fontFamily="Liberation Sans">A</text><text x="8" y="15" fontSize="7" fontWeight="700" fill="#a8701c" fontFamily="Liberation Sans">Z</text></> },
	{ glyph: <><path d="M4 1v10M1.500 8.500 4 12l2.500-3.500" fill="none" stroke="#4a6f9a" strokeWidth="1.500" /><path d="M8 3h7M8 6h6M8 9h5M8 12h7" stroke="#777" /></> },
];

const App: React.FC = () => (
	<>
		<GlobalStyle />
		<Desktop>
			<TopBar>
				<SearchGlass />
				<SearchBox>Search (Ctrl+I)</SearchBox>
				<WinControls>
					<svg width="11" height="11" viewBox="0 0 11 11"><path d="M0 5.500h11" stroke="#999" /></svg>
					<svg width="11" height="11" viewBox="0 0 11 11"><path d="M.5 3.500h7v7h-7zM3 3.500v-3h7.500v7h-3" fill="none" stroke="#999" /></svg>
					<svg width="11" height="11" viewBox="0 0 11 11"><path d="M0 0l11 11M11 0 0 11" stroke="#999" /></svg>
				</WinControls>
			</TopBar>

			<Workspace>
				<LeftColumn>
					<ProjectsPanel>
						<BlueLine />
					</ProjectsPanel>
					<NavigatorPanel>
						<MemberList>
							{members.map((m) => (
								<MemberRow key={m.name}>
									<MemberIcon kind={m.kind} />
									<span>
										{m.name}
										<TypeName>{m.type}</TypeName>
										{m.tail}
									</span>
								</MemberRow>
							))}
						</MemberList>
						<NavToolbar>
							<DropMark />
							{navTools.map((t, i) => (
								<React.Fragment key={i}>
									<ToolButton $on={t.on}>
										<svg width="16" height="16" viewBox="0 0 16 16">{t.glyph}</svg>
									</ToolButton>
									{t.sepAfter && <ToolSep />}
								</React.Fragment>
							))}
						</NavToolbar>
					</NavigatorPanel>
				</LeftColumn>

				<EditorColumn>
					<TabStrip>
						<EditorTab>
							FrmVotacionesFrame.java
							<X size={13} strokeWidth={1} color="#666" />
						</EditorTab>
						<TabNav>
							<ChevronLeft size={16} strokeWidth={1.2} />
							<NextArrow size={16} strokeWidth={1.2} />
							<ChevronDown size={16} strokeWidth={1.2} />
							<Square size={13} strokeWidth={1.2} />
						</TabNav>
					</TabStrip>
					<EditorBody>
						<EditorToolbar>
							<DesignMark />
						</EditorToolbar>
						<PreviewHeader>x</PreviewHeader>
						<LavenderEdge $top={12} $h={6} />
						<Canvas>
							<Band $tone="gray" $h={33} $mt={1} $inset={16} />
							<TitleStrip>
								22 - Al infinito y más allá
								<SmallGray />
							</TitleStrip>
							<Band $tone="gray" $h={42} $mt={1} />
							<SpringRow>
								<SpringH>
									<svg width="100%" height="8">
										<defs>
											<pattern id="zig" width="10" height="8" patternUnits="userSpaceOnUse">
												<polyline points="0,1 5,6 10,1" fill="none" stroke="#b9b9b9" />
											</pattern>
										</defs>
										<rect width="100%" height="8" fill="url(#zig)" />
									</svg>
								</SpringH>
								<PreviewSalir>Sali</PreviewSalir>
							</SpringRow>
							<Band $tone="gray" $h={35} $mt={2} />
							<Band $tone="green" $h={18} />
							<Band $tone="gray" $h={25} />
							<SplitRow>
								<SplitLeft>
									<Band $tone="gray" $h={221} />
									<Band $tone="gray" $h={17} $mt={2} />
								</SplitLeft>
								<SplitRight>
									<PreviewButton $bg="#ffff33" $fg="#000" $size={14.5} $h={60} $pad={27}>Consulta Datos Candida</PreviewButton>
									<Band $tone="gray" $h={17} $mt={1} />
									<Band $tone="green" $h={23} />
									<Band $tone="gray" $h={17} />
									<Band $tone="green" $h={23} />
									<Band $tone="gray" $h={7} />
									<PreviewButton $bg="#3300ff" $fg="#ff6666" $size={18.3} $h={65} $pad={15}>Consulta Datos Vota</PreviewButton>
									<Band $tone="gray" $h={26} $mt={1} />
								</SplitRight>
							</SplitRow>
							<Band $tone="green" $h={22} />
							<Band $tone="gray" $h={8} />
							<Band $tone="green" $h={23} $mt={1} />
							<Band $tone="gray" $h={11} />
							<Band $tone="green" $h={23} />
							<BottomGroup>
								<BottomRail>
									<RailGray />
								</BottomRail>
								<BottomMain>
									<Band $tone="gray" $h={17} />
									<PreviewTotals>
										<PreviewLabel $w={116}>Total de Votos:</PreviewLabel>
										<PreviewGap />
										<PreviewFieldCell>
											<PreviewField $w={100} $h={21} />
										</PreviewFieldCell>
										<PreviewEmpty />
										<PreviewLabel $w={0} $grow>
											El candidato ganador es:
											<PreviewField $w={160} $h={21} $ml={5} />
										</PreviewLabel>
									</PreviewTotals>
									<SpringsRow>
										{[0, 1, 2, 3, 4, 5, 6].map((n) => (
											<Zigzag key={n} width={8} height={34} step={4} />
										))}
									</SpringsRow>
								</BottomMain>
							</BottomGroup>
						</Canvas>
						<HandleRow>
							<Handle $x={13} />
							<Handle $x={552} />
						</HandleRow>
						<LavenderEdge $top={0} $h={2} />
						<EditorSpacer />
						<HScroll>
							<HScrollEnd />
						</HScroll>
					</EditorBody>
				</EditorColumn>

				<RightColumn>
					<SideTabs $h={29}>
						<SideTab>
							Palette
							<X size={13} strokeWidth={1} color="#666" />
						</SideTab>
						<DashMark />
					</SideTabs>
					<PalettePane>
						<SectionHead $bold $indent={4}>
							<ChevronDown size={14} color="#b0b0b0" strokeWidth={2} />
							Swing Containers
						</SectionHead>
						<PaletteGrid>
							{containers.map((c) => (
								<PaletteItem key={c}>
									<PaletteGlyph name={c} />
									{c}
								</PaletteItem>
							))}
						</PaletteGrid>
						<SectionHead $bold $indent={4}>
							<ChevronDown size={14} color="#b0b0b0" strokeWidth={2} />
							Swing Controls
						</SectionHead>
						<PaletteGrid>
							{controls.map((c) => (
								<PaletteItem key={c}>
									<PaletteGlyph name={c} />
									{c}
								</PaletteItem>
							))}
						</PaletteGrid>
						{["Swing Menus", "Swing Windows", "Swing Fillers", "AWT", "Beans"].map((h) => (
							<SectionHead key={h} $bold $h={17} $indent={4}>
								<ChevronRight size={14} color="#b0b0b0" strokeWidth={2} />
								{h}
							</SectionHead>
						))}
					</PalettePane>
					<SideTabs $h={33}>
						<SideTab>
							FrmVotacionesFrame.java - Properties
							<X size={13} strokeWidth={1} color="#666" />
						</SideTab>
						<DashMark />
					</SideTabs>
					<PropsPane>
						<PropsSheet>
							<SectionHead $h={19} $indent={0}>
								<ChevronDown size={14} color="#b0b0b0" strokeWidth={2} />
								Properties
							</SectionHead>
							<PropRow><PropName>Name</PropName><PropValue>FrmVotacionesFrame</PropValue></PropRow>
							<PropRow><PropName>Extension</PropName><PropValue><PropText>java</PropText><DotsButton>...</DotsButton></PropValue></PropRow>
							<PropRow><PropName>File Size</PropName><PropValue $dim>35037</PropValue></PropRow>
							<PropRow><PropName>Modification Time</PropName><PropValue $dim>17/07/2022, 10:17:16 a. m.</PropValue></PropRow>
							<PropRow><PropName>All Files</PropName><PropValue $dim><PropText>C:\Users\PC-15\Documents\...</PropText><DotsButton>...</DotsButton></PropValue></PropRow>
							<SectionHead $h={20} $indent={0}>
								<ChevronDown size={14} color="#b0b0b0" strokeWidth={2} />
								Classpaths
							</SectionHead>
							<PropRow><PropName>Compile Classpath</PropName><PropValue $dim><PropText>H:\Descargas\MINTIC\Ciclo ...</PropText><DotsButton>...</DotsButton></PropValue></PropRow>
							<PropRow><PropName>Runtime Classpath</PropName><PropValue $dim><PropText>H:\Descargas\MINTIC\Ciclo ...</PropText><DotsButton>...</DotsButton></PropValue></PropRow>
							<PropRow><PropName>Boot Classpath</PropName><PropValue $dim><PropText>nbjrt:file:/C:/Program%20File...</PropText><DotsButton>...</DotsButton></PropValue></PropRow>
						</PropsSheet>
						<PropsFooter>
							<FooterName>FrmVotacionesFrame.java</FooterName>
							<HelpCircle size={18} fill="#b8b8b8" color="#fff" />
						</PropsFooter>
					</PropsPane>
				</RightColumn>
			</Workspace>

			<StatusBar>
				<StatusCell $w={107}>CRUDMVC (run) #3</StatusCell>
				<ProgressTrack>running...</ProgressTrack>
				<StatusCell $w={26} $center>
					<X size={12} strokeWidth={1} color="#666" />
				</StatusCell>
				<StatusCell $w={67}>(2 more...)</StatusCell>
				<StatusSep />
				<StatusCell $w={110} $center>128:32</StatusCell>
				<StatusSep />
				<StatusCell $w={25} $center>INS</StatusCell>
				<StatusSep />
			</StatusBar>

			<Taskbar>
				<StartSlot><StartLogo /></StartSlot>
				<TaskSearch>
					<svg width="18" height="18" viewBox="0 0 18 18">
						<circle cx="11" cy="7" r="5.500" fill="none" stroke="#222" strokeWidth="1.200" />
						<path d="M7 11 1.500 16.500" stroke="#222" strokeWidth="1.400" />
					</svg>
					Escribe aquí para buscar
				</TaskSearch>
				<TaskIcon $w={48}>
					<svg width="16" height="16" viewBox="0 0 16 16"><circle cx="8" cy="8" r="6.500" fill="none" stroke="#111" strokeWidth="2" /></svg>
				</TaskIcon>
				<TaskIcon $w={48}>
					<svg width="18" height="18" viewBox="0 0 18 18"><rect x="3.500" y="4.500" width="9" height="9" fill="none" stroke="#111" /><path d="M2 1h12M2 17h12M15 4h2v2h-2zM15 8h2v2h-2z" stroke="#111" fill="none" /></svg>
				</TaskIcon>
				<TaskIcon $w={49} $ml={3}><EdgeIcon /></TaskIcon>
				<TaskIcon $w={48} $open><FolderIcon /></TaskIcon>
				<TaskIcon $w={49}><MailIcon /></TaskIcon>
				<TaskIcon $w={49}><ChromeIcon /></TaskIcon>
				<TaskIcon $w={49} $open><ChromeIcon /></TaskIcon>
				<TaskIcon $w={49} $open><MonitorIcon /></TaskIcon>
				<TaskIcon $w={49} $open><CubeIcon /></TaskIcon>
				<TaskIcon $w={49} $open><ArrowAppIcon /></TaskIcon>
				<TaskIcon $w={49} $open><NotepadIcon /></TaskIcon>
				<TaskIcon $w={48} $open $active><JavaIcon size={26} /></TaskIcon>
				<TaskIcon $w={49} $open><PaintIcon /></TaskIcon>
				<Tray>
					<RainCloud />
					<TrayText $ml={11} $w={71}>14°C&nbsp; Lluvia</TrayText>
					<TrayItem $ml={14}><ChevronUp size={18} strokeWidth={1.3} /></TrayItem>
					<TrayItem $ml={8}>
						<svg width="14" height="20" viewBox="0 0 14 20"><rect x="3.500" y="4.500" width="7" height="10" rx="2" fill="none" stroke="#222" /><path d="M1 6v8M4 1h6M4 18h6" stroke="#222" /></svg>
					</TrayItem>
					<TrayItem $ml={8}>
						<svg width="18" height="18" viewBox="0 0 18 18"><path d="M1.500 2.500h15v9h-8v4h3M8.500 11.500h-7z" fill="none" stroke="#222" /><rect x="4" y="4" width="3" height="5" fill="none" stroke="#222" /></svg>
					</TrayItem>
					<TrayItem $ml={5}>
						<svg width="17" height="18" viewBox="0 0 17 18"><path d="M1 6.500h3L8 3v12L4 11.500H1z" fill="none" stroke="#222" /><path d="M11 6c1 2 1 4 0 6M13.500 4c2 3 2 7 0 10" fill="none" stroke="#777" /></svg>
					</TrayItem>
					<TrayText $ml={12} $w={20}>ESP</TrayText>
					<Clock>
						11:13 a. m.
						<br />
						28/07/2022
					</Clock>
					<NoteBadge>
						<svg width="16" height="16" viewBox="0 0 16 16"><path d="M0 0h16v12H7l-4 4v-4H0z" fill="#111" /><path d="M3 3h10M3 6h10M3 9h6" stroke="#d4dfec" /></svg>
						<BadgeCount>2</BadgeCount>
					</NoteBadge>
				</Tray>
			</Taskbar>

			<VotingWindow>
				<WinTitle>
					<JavaIcon size={16} />
					<WinButtons>
						<svg width="11" height="11" viewBox="0 0 11 11"><path d="M0 5.500h11" stroke="#111" /></svg>
						<svg width="11" height="11" viewBox="0 0 11 11"><rect x="0.500" y="0.500" width="10" height="10" fill="none" stroke="#111" /></svg>
						<svg width="11" height="11" viewBox="0 0 11 11"><path d="M0 0l11 11M11 0 0 11" stroke="#111" /></svg>
					</WinButtons>
				</WinTitle>
				<WinBand />
				<WinBody>
					<WinHeading>Sistema de votaciones - MINTIC 2022 - Al infinito y más allá</WinHeading>
					<TopActions>
						<VotosBadge>Votos</VotosBadge>
						<SalirButton>Salir</SalirButton>
					</TopActions>
					<FormColumns>
						<VotesBlock>
							<ColHeads>
								<ColHead $w={438} $pl={90}>CANDIDATOS:</ColHead>
								<ColHead $pl={0}>NÚMERO DE VOTOS:</ColHead>
							</ColHeads>
							{parties.map((p, i) => (
								<VoteRow key={p.name} $gap={gapOf(parties, i)}>
									<PartyLabel>{p.name}</PartyLabel>
									<TextField $w={96} $ml={114}>{p.votes}</TextField>
								</VoteRow>
							))}
						</VotesBlock>
						<ActionBlock>
							<QueryButton $bg="#ffff44" $fg="#000" $size={14.5} $h={70} $mt={45}>Consulta Datos Candidatos</QueryButton>
							<QueryButton $bg="#4719ff" $fg="#ff6666" $size={18.3} $h={63} $mt={114}>Consulta Datos Votantes</QueryButton>
						</ActionBlock>
						<PercentColumn>
							<PercentHead>
								<ColHeads>
									<ColHead $pl={0}>% DE VOTOS</ColHead>
								</ColHeads>
							</PercentHead>
							{percents.map((p, i) => (
								<TextField key={i} $w={96} $mt={gapOf(percents, i)}>{p.value}</TextField>
							))}
						</PercentColumn>
					</FormColumns>
					<TotalsRow>
						<TotalLabel>Total de Votos:</TotalLabel>
						<TextField $w={96} $ml={8} $mt={14}>32</TextField>
						<WinnerBand>
							El candidato ganador es:
							<WinnerField>PARTIDO CONSERVADOR COLOMBIANO</WinnerField>
						</WinnerBand>
					</TotalsRow>
				</WinBody>
			</VotingWindow>
		</Desktop>
	</>
);

export default App;
